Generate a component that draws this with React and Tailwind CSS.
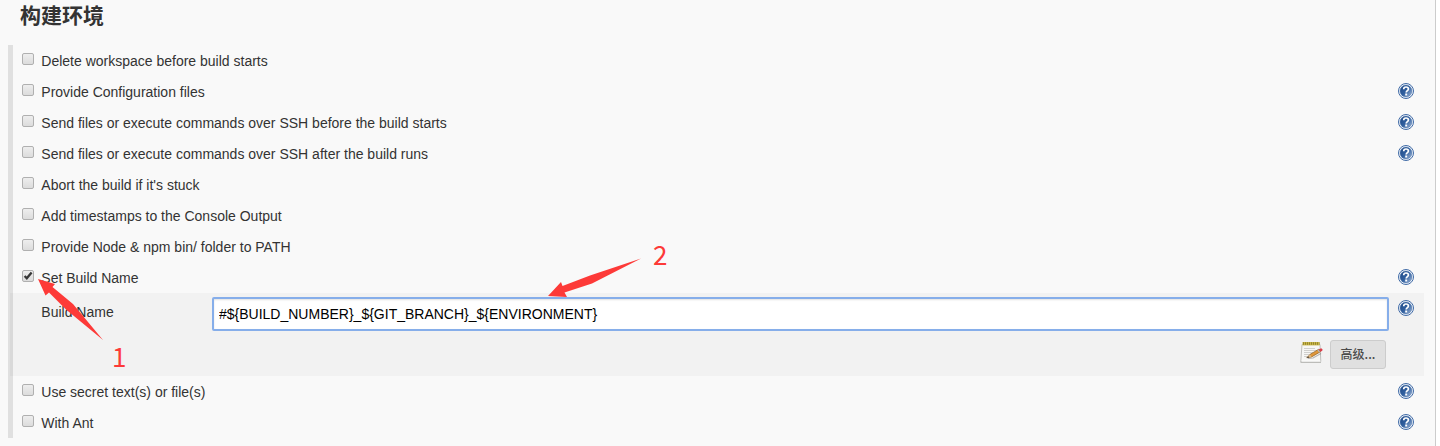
import React from "react";

function HelpIcon() {
  return (
    <svg viewBox="0 0 16 16" className="block h-4 w-4 shrink-0">
      <defs>
        <linearGradient id="help" x1="0" y1="0.1" x2="1" y2="0.9">
          <stop offset="0" stopColor="#204a87" />
          <stop offset="0.5" stopColor="#31609f" />
          <stop offset="1" stopColor="#9db4d5" />
        </linearGradient>
      </defs>
      <circle cx="8" cy="8" r="7.5" fill="#fff" stroke="#3f6aa6" strokeWidth="1" />
      <circle cx="8" cy="8" r="6" fill="url(#help)" stroke="#4a74ac" strokeWidth="0.5" />
      <path d="M5.7 6.2C5.7 4.6 6.6 4 8 4S10.4 4.8 10.4 6C10.4 7.6 8.2 7.6 8.2 9.5" fill="none" stroke="#fff" strokeWidth="1.7" />
      <rect x="7.2" y="10.5" width="2" height="2" fill="#fff" />
    </svg>
  );
}

function NotepadIcon() {
  return (
    <svg viewBox="0 0 24 24" className="block h-6 w-6">
      <path d="M2 3.5H20L20.8 20.5H0.8Z" fill="#f7f7f5" stroke="#c0c0bd" />
      <path d="M0.5 20H21V22H0.5Z" fill="#bcbcb9" />
      <path d="M1.5 20.2H20.5" stroke="#fff" />
      <path d="M4 7.5H15M4 9.5H17M4 11.5H13M4 13.5H10M4 15.5H8" stroke="#d0d0cd" />
      <rect x="2.5" y="1" width="17" height="3.4" fill="#c9b748" />
      <path d="M3 2.5H19.5" stroke="#94852c" strokeWidth="2.6" strokeDasharray="1 1" />
      <path d="M8 17.5L13 17L21 12.5" stroke="#777" strokeWidth="1.2" fill="none" opacity="0.5" />
      <path d="M6.8 16.8L10 13.4L18.8 8.2L20.4 10.8L11.6 15.9Z" fill="#e0983a" stroke="#8a5b22" strokeWidth="0.7" />
      <path d="M6.8 16.8L10 13.4L11.6 15.9Z" fill="#dcb984" />
      <path d="M6.6 17L8.4 15.2L9.2 16.4Z" fill="#333" />
      <path d="M18.8 8.2L21.3 7.2L22.7 8.8L22 10L20.4 10.8Z" fill="#dc3f4b" />
      <path d="M18 8.7L19.6 11.3" stroke="#b4babe" strokeWidth="1.2" />
    </svg>
  );
}

function Checkbox({ checked }) {
  return (
    <span className="mt-2 h-[12px] w-[12px] shrink-0 rounded-[2px] border border-[#b0b0b0] bg-linear-to-b from-[#eeeeee] to-[#dcdcdc]">
      {checked && (
        <svg viewBox="0 0 10 10" className="block h-[10px] w-[10px]">
          <path d="M1.6 5L3.8 7.3L8.6 1.5" fill="none" stroke="#383838" strokeWidth="2.3" />
        </svg>
      )}
    </span>
  );
}

function Option({ label, help, checked }) {
  return (
    <div className="flex h-[31px] items-start pr-[13px] pl-[9px]">
      <Checkbox checked={checked} />
      <span className="ml-[7.3px] flex-1 pt-[6px] leading-5">{label}</span>
      {help && <span className="pt-[7px]"><HelpIcon /></span>}
    </div>
  );
}

const before = [
  { label: "Delete workspace before build starts" },
  { label: "Provide Configuration files", help: true },
  { label: "Send files or execute commands over SSH before the build starts", help: true },
  { label: "Send files or execute commands over SSH after the build runs", help: true },
  { label: "Abort the build if it's stuck" },
  { label: "Add timestamps to the Console Output" },
  { label: "Provide Node & npm bin/ folder to PATH" },
  { label: "Set Build Name", help: true, checked: true },
];

const after = [
  { label: "Use secret text(s) or file(s)", help: true },
  { label: "With Ant", help: true },
];

export default function App() {
  return (
    <div className="relative h-[446px] w-[1440px] overflow-hidden bg-white font-['Liberation_Sans','Noto_Sans_CJK_SC',sans-serif] text-[14px] text-[#333]">
      <div className="h-full w-[1436px] border-r border-[#ccc] bg-[#f9f9f9]">
        <h2 className="h-[45px] pl-5 font-['Noto_Sans_CJK_SC',sans-serif] text-[21px] leading-[29px] font-bold">构建环境</h2>
        <section className="ml-2 h-[393px] w-[1419px] border-l-[5px] border-[#e0e0e0]">
          {before.map((o) => <Option key={o.label} {...o} />)}
          <div className="mr-[3px] -ml-[3px] flex h-[83px] bg-black/[0.028] pl-[31.3px]">
            <div className="w-[170.7px] shrink-0 pt-[9px] leading-5">Build Name</div>
            <div className="w-[1177px] shrink-0 pt-1">
              <input
                className="block h-[34px] w-full rounded-[2px] border-2 border-[#86aeea] bg-white px-[5px] text-[14px] text-black shadow-[inset_0_1px_2px_rgba(0,0,0,0.12)] outline-none"
                defaultValue="#${BUILD_NUMBER}_${GIT_BRANCH}_${ENVIRONMENT}"
              />
              <div className="flex justify-end gap-[6px] pt-[9px] pr-[3px]">
                <span className="pt-[1px]"><NotepadIcon /></span>
                <button className="h-[29px] w-14 rounded-[3px] border border-[#ccc] bg-[#e0e0e0] pb-[2px] font-['Noto_Sans_CJK_SC',sans-serif] text-[12px] leading-[24px] font-medium text-[#4a4a4a]">高级...</button>
              </div>
            </div>
            <div className="ml-[9px] pt-[7px]"><HelpIcon /></div>
          </div>
          {after.map((o) => <Option key={o.label} {...o} />)}
        </section>
      </div>
      <svg viewBox="0 0 1440 446" className="pointer-events-none absolute inset-0 h-full w-full">
        <g fill="#fd3a38">
          <path d="M38 279L55 284L52.5 287L73 304L103 340L66 309.5L49 292.5L45.5 295.5Z" />
          <path d="M548 296L561 282L562.5 286L590 275.5L641 258.5L592 283.5L564.5 292.5L567 297Z" />
        </g>
      </svg>
      <span className="absolute top-[337px] left-[112px] font-['Noto_Sans_CJK_SC',sans-serif] text-[26px] leading-[38px] text-[#fd3a38]">1</span>
      <span className="absolute top-[235px] left-[653px] font-['Noto_Sans_CJK_SC',sans-serif] text-[26px] leading-[38px] text-[#fd3a38]">2</span>
    </div>
  );
}
